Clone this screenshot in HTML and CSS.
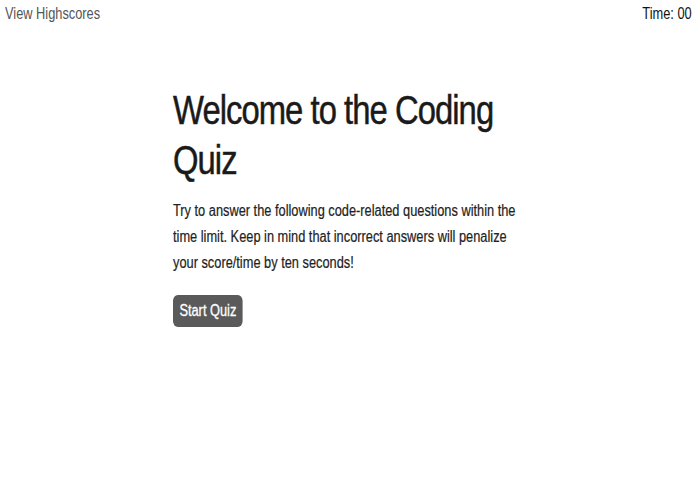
FILE: index.html
```html
<!DOCTYPE html>
<html lang="en">
<head>
<meta charset="utf-8">
<title>Coding Quiz</title>
<link rel="stylesheet" href="styles.css">
</head>
<body>
<header class="topbar">
  <a class="highscores" href="#">View Highscores</a>
  <div class="timer">Time: <span>00</span></div>
</header>
<main class="intro">
  <h1 class="title">Welcome to the Coding Quiz</h1>
  <p class="lead">Try to answer the following code-related questions within the time limit. Keep in mind that incorrect answers will penalize your score/time by ten seconds!</p>
  <button class="start" type="button">Start Quiz</button>
</main>
</body>
</html>
```
FILE: styles.css
```css
* { box-sizing: border-box; }
body {
  margin: 0;
  background: #fff;
  color: #222;
  font-family: "Liberation Sans", Arial, sans-serif;
}
/* the reference text is horizontally condensed (scaleX 0.8) */
.topbar {
  display: flex;
  justify-content: space-between;
  align-items: center;
  padding: 4px 8px 0 5px;
  font-size: 16px;
  line-height: 20px;
}
.highscores {
  display: inline-block;
  color: #555;
  text-decoration: none;
  transform: scaleX(0.8);
  transform-origin: 0 0;
}
.timer {
  color: #111;
  transform: scaleX(0.8);
  transform-origin: 100% 0;
}
.intro {
  width: 450px;
  margin: 61px 0 0 173px;
  transform: scaleX(0.8);
  transform-origin: 0 0;
}
.title {
  margin: 0;
  font-size: 41px;
  font-weight: 400;
  letter-spacing: -1.2px;
  line-height: 50px;
  color: #1a1a1a;
  -webkit-text-stroke: 0.5px #1a1a1a;
}
.lead {
  margin: 13px 0 0;
  font-size: 16px;
  line-height: 26px;
  color: #222;
  -webkit-text-stroke: 0.2px #222;
}
.start {
  margin-top: 19px;
  padding: 6px 8px;
  border: 0;
  border-radius: 6px;
  background: #5a5a5a;
  color: #fff;
  font-family: inherit;
  font-size: 16px;
  line-height: 20px;
  -webkit-text-stroke: 0.3px #fff;
}
```
